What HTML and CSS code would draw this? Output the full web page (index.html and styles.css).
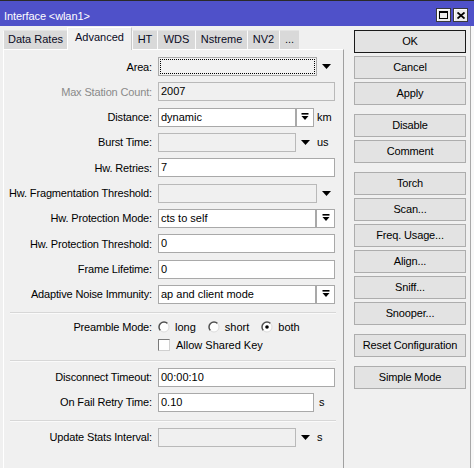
FILE: index.html
```html
<!DOCTYPE html>
<html>
<head>
<meta charset="utf-8">
<title>Interface &lt;wlan1&gt;</title>
<link rel="stylesheet" href="styles.css">
</head>
<body>
<div class="titlebar">
  <span class="title">Interface &lt;wlan1&gt;</span>
  <div class="caps">
    <span class="cap"><svg width="9" height="8" viewBox="0 0 9 8"><rect x="0.5" y="0.5" width="8" height="7" fill="none" stroke="#000"/><line x1="0" y1="1.5" x2="9" y2="1.5" stroke="#000"/></svg></span>
    <span class="cap"><svg width="8" height="7" viewBox="0 0 8 7"><path d="M0.5 0.5 L7.5 6.5 M7.5 0.5 L0.5 6.5" stroke="#000" stroke-width="1.8" fill="none"/></svg></span>
  </div>
</div>
<div class="winbody">
  <div class="left">
    <div class="tabs">
      <div class="tab t-dr">Data Rates</div>
      <div class="tab active t-adv">Advanced</div>
      <div class="tab t-ht">HT</div>
      <div class="tab t-wds">WDS</div>
      <div class="tab t-ns">Nstreme</div>
      <div class="tab t-nv">NV2</div>
      <div class="tab t-more">...</div>
    </div>
    <div class="panel">
      <div class="rows">
        <div class="row">
          <span class="lbl">Area:</span>
          <div class="ctl"><div class="fld ro focus w159"><span class="dots"></span></div><span class="arr"><svg width="9" height="5" viewBox="0 0 9 5"><polygon points="0,0 9,0 4.5,5" fill="#000"/></svg></span></div>
        </div>
        <div class="row">
          <span class="lbl dim">Max Station Count:</span>
          <div class="ctl"><div class="fld ro w177">2007</div></div>
        </div>
        <div class="row">
          <span class="lbl">Distance:</span>
          <div class="ctl"><div class="fld w138">dynamic</div><span class="dd w18"><svg width="8" height="8" viewBox="0 0 8 8"><rect x="0.5" y="0" width="7" height="1.6" fill="#000"/><polygon points="0.5,3 7.5,3 4,7" fill="#000"/></svg></span><span class="unit">km</span></div>
        </div>
        <div class="row">
          <span class="lbl">Burst Time:</span>
          <div class="ctl"><div class="fld ro w138"></div><span class="arr"><svg width="9" height="5" viewBox="0 0 9 5"><polygon points="0,0 9,0 4.5,5" fill="#000"/></svg></span><span class="unit">us</span></div>
        </div>
        <div class="row">
          <span class="lbl">Hw. Retries:</span>
          <div class="ctl"><div class="fld w177">7</div></div>
        </div>
        <div class="row">
          <span class="lbl">Hw. Fragmentation Threshold:</span>
          <div class="ctl"><div class="fld ro w159"></div><span class="arr"><svg width="9" height="5" viewBox="0 0 9 5"><polygon points="0,0 9,0 4.5,5" fill="#000"/></svg></span></div>
        </div>
        <div class="row">
          <span class="lbl">Hw. Protection Mode:</span>
          <div class="ctl"><div class="fld w158">cts to self</div><span class="dd w19"><svg width="8" height="8" viewBox="0 0 8 8"><rect x="0.5" y="0" width="7" height="1.6" fill="#000"/><polygon points="0.5,3 7.5,3 4,7" fill="#000"/></svg></span></div>
        </div>
        <div class="row">
          <span class="lbl">Hw. Protection Threshold:</span>
          <div class="ctl"><div class="fld w177">0</div></div>
        </div>
        <div class="row">
          <span class="lbl">Frame Lifetime:</span>
          <div class="ctl"><div class="fld w177">0</div></div>
        </div>
        <div class="row">
          <span class="lbl">Adaptive Noise Immunity:</span>
          <div class="ctl"><div class="fld w158">ap and client mode</div><span class="dd w19"><svg width="8" height="8" viewBox="0 0 8 8"><rect x="0.5" y="0" width="7" height="1.6" fill="#000"/><polygon points="0.5,3 7.5,3 4,7" fill="#000"/></svg></span></div>
        </div>
      </div>

      <div class="sep s1"></div>

      <div class="row r18 pre">
        <span class="lbl">Preamble Mode:</span>
        <div class="ctl radios">
          <span class="ritem"><svg class="radio" width="12" height="12" viewBox="0 0 12 12"><circle cx="6" cy="6" r="5" fill="#fff"/><path d="M9.54 2.46 A5 5 0 0 0 2.46 9.54" stroke="#505050" stroke-width="1.5" fill="none"/><path d="M2.46 9.54 A5 5 0 0 0 9.54 2.46" stroke="#dcdcdc" stroke-width="1" fill="none"/></svg>long</span>
          <span class="ritem"><svg class="radio" width="12" height="12" viewBox="0 0 12 12"><circle cx="6" cy="6" r="5" fill="#fff"/><path d="M9.54 2.46 A5 5 0 0 0 2.46 9.54" stroke="#505050" stroke-width="1.5" fill="none"/><path d="M2.46 9.54 A5 5 0 0 0 9.54 2.46" stroke="#dcdcdc" stroke-width="1" fill="none"/></svg>short</span>
          <span class="ritem"><svg class="radio" width="12" height="12" viewBox="0 0 12 12"><circle cx="6" cy="6" r="5" fill="#fff"/><path d="M9.54 2.46 A5 5 0 0 0 2.46 9.54" stroke="#505050" stroke-width="1.5" fill="none"/><path d="M2.46 9.54 A5 5 0 0 0 9.54 2.46" stroke="#dcdcdc" stroke-width="1" fill="none"/><circle cx="6" cy="6" r="1.8" fill="#000"/></svg>both</span>
        </div>
      </div>
      <div class="row r18">
        <span class="lbl"></span>
        <div class="ctl"><span class="chk"></span><span class="chktext">Allow Shared Key</span></div>
      </div>

      <div class="sep s2"></div>

      <div class="row mt6">
        <span class="lbl">Disconnect Timeout:</span>
        <div class="ctl"><div class="fld w177">00:00:10</div></div>
      </div>
      <div class="row mt6">
        <span class="lbl">On Fail Retry Time:</span>
        <div class="ctl"><div class="fld w156">0.10</div><span class="unit u4">s</span></div>
      </div>

      <div class="sep s3"></div>

      <div class="row mt6">
        <span class="lbl">Update Stats Interval:</span>
        <div class="ctl"><div class="fld ro w138"></div><span class="arr"><svg width="9" height="5" viewBox="0 0 9 5"><polygon points="0,0 9,0 4.5,5" fill="#000"/></svg></span><span class="unit">s</span></div>
      </div>
    </div>
  </div>

  <div class="buttons">
    <div class="btn default">OK</div>
    <div class="btn">Cancel</div>
    <div class="btn">Apply</div>
    <div class="btn grp">Disable</div>
    <div class="btn">Comment</div>
    <div class="btn grp">Torch</div>
    <div class="btn">Scan...</div>
    <div class="btn">Freq. Usage...</div>
    <div class="btn">Align...</div>
    <div class="btn">Sniff...</div>
    <div class="btn">Snooper...</div>
    <div class="btn grp">Reset Configuration</div>
    <div class="btn grp">Simple Mode</div>
  </div>
</div>
</body>
</html>
```

FILE: styles.css
```css
html, body {
  margin: 0;
  padding: 0;
}
body {
  width: 474px;
  height: 468px;
  overflow: hidden;
  background: #f8f8f8;
  font-family: "Liberation Sans", Arial, sans-serif;
  font-size: 11px;
  color: #000;
}

/* title bar */
.titlebar {
  box-sizing: border-box;
  height: 26px;
  border-top: 1px solid #2a2a2a;
  background: #4f51c9;
  display: flex;
  align-items: flex-start;
  justify-content: space-between;
  padding: 0 6px 0 4px;
}
.title {
  color: #fff;
  line-height: 14px;
  padding-top: 8px;
  letter-spacing: -0.1px;
}
.caps {
  display: flex;
  gap: 2px;
  padding-top: 7px;
}
.cap {
  box-sizing: border-box;
  width: 15px;
  height: 14px;
  background: #ececec;
  border: 1px solid #3a3a3a;
  box-shadow: inset 1px 1px 0 #fff;
  display: flex;
  align-items: center;
  justify-content: center;
}

/* window body */
.winbody {
  box-sizing: border-box;
  width: 471px;
  height: 442px;
  background: #f0f0f0;
  border-right: 1px solid #a8a8a8;
  display: flex;
  align-items: stretch;
}
.left {
  width: 341px;
  margin-left: 3px;
  display: flex;
  flex-direction: column;
}

/* tabs */
.tabs {
  height: 23px;
  display: flex;
  align-items: flex-end;
  position: relative;
  z-index: 1;
}
.tab {
  box-sizing: border-box;
  height: 19px;
  background: #d9d9d9;
  border-left: 1px solid #fbfbfb;
  border-top: 1px solid #e4e4e4;
  text-align: center;
  line-height: 17px;
  color: #0a0a1e;
  white-space: nowrap;
}
.tab.active {
  height: 23px;
  margin-bottom: -1px;
  background: #f0f0f0;
  border-top: 1px solid #fff;
  border-left: 1px solid #fff;
  border-right: 1px solid #c8c8c8;
  line-height: 18px;
}
.t-dr { width: 64px; }
.t-adv { width: 65px; }
.t-ht { width: 25px; }
.t-wds { width: 38px; }
.t-ns { width: 52px; }
.t-nv { width: 32px; }
.t-more { width: 20px; }

/* panel */
.panel {
  flex: 1;
  box-sizing: border-box;
  background: #f0f0f0;
  border-top: 1px solid #fff;
  border-left: 1px solid #fff;
  border-right: 1px solid #a0a0a0;
  padding-top: 7px;
}
.rows {
  display: flex;
  flex-direction: column;
  gap: 6.333px;
}
.row {
  display: flex;
  align-items: center;
  height: 19px;
}
.row.r18 { height: 18px; }
.row.pre { margin-top: 4px; }
.row.mt6 { margin-top: 6px; }
.lbl {
  flex: 0 0 148px;
  text-align: right;
  margin-right: 6px;
  white-space: nowrap;
  letter-spacing: -0.15px;
}
.lbl.dim { color: #8a8a8a; }
.ctl {
  display: flex;
  align-items: center;
  height: 100%;
}

/* fields */
.fld {
  box-sizing: border-box;
  height: 19px;
  border: 1px solid #a9a9a9;
  background: #fff;
  padding: 0 2px;
  line-height: 17px;
  white-space: nowrap;
  overflow: hidden;
  position: relative;
}
.fld.ro {
  background: #f0f0f0;
  border-color: #b9b9b9;
}
.fld.focus {
  background: #f2f2f2;
  border-color: #a9a9a9;
}
.dots {
  position: absolute;
  left: 1px;
  top: 1px;
  right: 1px;
  bottom: 1px;
  border: 1px dotted #000;
}
.w177 { width: 177px; }
.w159 { width: 159px; }
.w158 { width: 158px; }
.w156 { width: 156px; }
.w138 { width: 138px; }

.dd {
  box-sizing: border-box;
  height: 19px;
  border: 1px solid #a9a9a9;
  background: #fff;
  display: flex;
  align-items: center;
  justify-content: center;
}
.dd.w18 { width: 18px; margin-left: 0; }
.dd.w19 { width: 19px; }
.arr {
  width: 18px;
  height: 19px;
  display: flex;
  align-items: center;
  justify-content: center;
}
.unit {
  margin-left: 3px;
}
.unit.u4 { margin-left: 5px; }

/* separators */
.sep {
  height: 1px;
  background: #d7d7d7;
  border-bottom: 1px solid #fafafa;
  margin: 0 7px 0 6px;
}
.sep.s1 { margin-top: 8px; }
.sep.s2 { margin-top: 6px; }
.sep.s3 { margin-top: 8px; }

/* radios / checkbox */
.radios {
  gap: 12px;
}
.ritem {
  display: flex;
  align-items: center;
}
.radio {
  margin-right: 5px;
}
.chk {
  box-sizing: border-box;
  width: 12px;
  height: 12px;
  background: #fff;
  border: 1px solid;
  border-color: #7a7a7a #d0d0d0 #d0d0d0 #7a7a7a;
}
.chktext {
  margin-left: 6px;
}

/* buttons */
.buttons {
  margin-left: 10px;
  width: 112px;
  padding-top: 4px;
  display: flex;
  flex-direction: column;
  gap: 3px;
}
.btn {
  box-sizing: border-box;
  height: 23px;
  border: 1px solid #adadad;
  background: #e3e3e3;
  text-align: center;
  line-height: 21px;
  white-space: nowrap;
  letter-spacing: -0.15px;
}
.btn.default {
  border-color: #1a1a1a;
}
.btn.grp {
  margin-top: 6px;
}
```
